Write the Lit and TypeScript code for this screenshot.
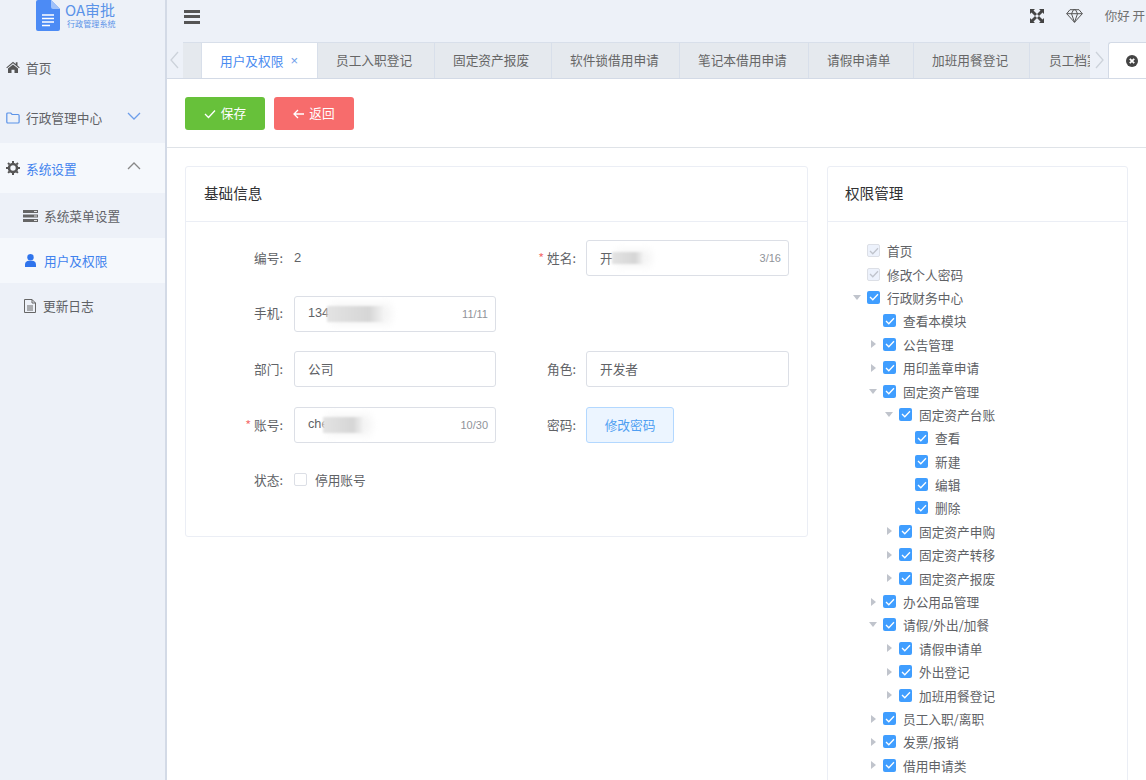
import { LitElement, css, html, svg } from 'lit';
import { customElement } from 'lit/decorators.js';

type TreeRow = { label: string; level: number; arrow?: 'open' | 'closed'; disabled?: boolean };

const TABS = [
  { label: '员工入职登记', width: 117 },
  { label: '固定资产报废', width: 117 },
  { label: '软件锁借用申请', width: 128 },
  { label: '笔记本借用申请', width: 129 },
  { label: '请假申请单', width: 105 },
  { label: '加班用餐登记', width: 116 },
];

const TREE: TreeRow[] = [
  { label: '首页', level: 0, disabled: true },
  { label: '修改个人密码', level: 0, disabled: true },
  { label: '行政财务中心', level: 0, arrow: 'open' },
  { label: '查看本模块', level: 1 },
  { label: '公告管理', level: 1, arrow: 'closed' },
  { label: '用印盖章申请', level: 1, arrow: 'closed' },
  { label: '固定资产管理', level: 1, arrow: 'open' },
  { label: '固定资产台账', level: 2, arrow: 'open' },
  { label: '查看', level: 3 },
  { label: '新建', level: 3 },
  { label: '编辑', level: 3 },
  { label: '删除', level: 3 },
  { label: '固定资产申购', level: 2, arrow: 'closed' },
  { label: '固定资产转移', level: 2, arrow: 'closed' },
  { label: '固定资产报废', level: 2, arrow: 'closed' },
  { label: '办公用品管理', level: 1, arrow: 'closed' },
  { label: '请假/外出/加餐', level: 1, arrow: 'open' },
  { label: '请假申请单', level: 2, arrow: 'closed' },
  { label: '外出登记', level: 2, arrow: 'closed' },
  { label: '加班用餐登记', level: 2, arrow: 'closed' },
  { label: '员工入职/离职', level: 1, arrow: 'closed' },
  { label: '发票/报销', level: 1, arrow: 'closed' },
  { label: '借用申请类', level: 1, arrow: 'closed' },
];

const chevron = (d: string, color: string, w = 14, h = 10, vb = '0 0 14 10') => svg`
  <svg width=${w} height=${h} viewBox=${vb} fill="none" stroke=${color} stroke-width="1.3"><path d=${d}/></svg>`;

@customElement('app-root')
export class AppRoot extends LitElement {
  render() {
    return html`
      <div class="page">
        <aside class="side">
          <div class="logo">
            <svg width="24" height="32" viewBox="0 0 24 32">
              <path d="M2 0H15L24 9V29a2 2 0 0 1-2 2H2a2 2 0 0 1-2-2V2a2 2 0 0 1 2-2z" fill="#4c8bf5"/>
              <path d="M15 0L24 9H17a2 2 0 0 1-2-2z" fill="#a1c2fa"/>
              <path d="M6 15H18M6 18.5H18M6 22H18M6 25.5H14" stroke="#fff" stroke-width="1.4"/>
            </svg>
            <div class="logo-text">
              <div class="logo-title">OA审批</div>
              <div class="logo-sub">行政管理系统</div>
            </div>
          </div>
          <div class="menu-item home">
            <svg class="mi" width="14" height="12" viewBox="0 0 14 12" fill="#555"><path d="M7 .8L.3 6.400l.7.8L7 2.300l6 4.900.7-.8-2.200-1.900V1.200H9.800v1.700zM2 7.600L7 3.500l5 4.100V12H8.500V8.800h-3V12H2z"/></svg>
            首页
          </div>
          <div class="menu-item admin">
            <svg class="mi" width="14" height="12" viewBox="0 0 14 12" fill="none" stroke="#5b93e8" stroke-width="1.2"><path d="M.8 2a1 1 0 0 1 1-1h3l1.300 1.500h6a1 1 0 0 1 1 1v6.500a1 1 0 0 1-1 1H1.800a1 1 0 0 1-1-1z"/></svg>
            行政管理中心
            <span class="caret">${chevron('M1 2l6 6 6-6', '#6d9eea')}</span>
          </div>
          <div class="menu-item sys">
            <svg class="mi" width="14" height="14" viewBox="0 0 14 14"><circle cx="7" cy="7" r="4" fill="none" stroke="#555" stroke-width="2.6"/><path d="M7 0v14M0 7h14M2 2l10 10M12 2L2 12" stroke="#555" stroke-width="2" stroke-dasharray="2 10"/></svg>
            <span class="blue">系统设置</span>
            <span class="caret">${chevron('M1 8l6-6 6 6', '#888')}</span>
          </div>
          <div class="sub">
            <svg class="si" width="15" height="12" viewBox="0 0 15 12" fill="#666"><path d="M0 0h15v3H0zM0 4.500h15v3H0zM0 9h15v3H0z"/><path d="M11 1.500h3M11 6h3M11 10.500h3" stroke="#fff" stroke-width=".8"/></svg>
            系统菜单设置
          </div>
          <div class="sub on">
            <svg class="si user" width="11" height="13" viewBox="0 0 11 13" fill="#2f74ec"><circle cx="5.500" cy="3.200" r="3.200"/><path d="M0 13v-2.500C0 8 2 6.800 3.500 6.800h4C9 6.800 11 8 11 10.500V13z"/></svg>
            用户及权限
          </div>
          <div class="sub">
            <svg class="si log" width="12" height="14" viewBox="0 0 12 14" fill="none" stroke="#666"><path d="M.5.500h7.500l3.500 3.500v9.500H.5zM8 .500V4h3.500M3 7h6M3 9h6M3 11h6"/></svg>
            更新日志
          </div>
        </aside>

        <div class="main">
          <header class="top">
            <div class="burger"><i></i><i></i><i></i></div>
            <div class="top-right">
              <svg width="14" height="14" viewBox="0 0 14 14" fill="#444"><path d="M0 0h5L3.500 1.500 7 5 5 7 1.500 3.500 0 5zM14 0v5l-1.500-1.500L9 7 7 5l3.500-3.500L9 0zM0 14V9l1.500 1.500L5 7l2 2-3.500 3.500L5 14zM14 14H9l1.500-1.500L7 9l2-2 3.500 3.500L14 9z"/></svg>
              <svg width="17" height="14" viewBox="0 0 17 14" fill="none" stroke="#555" stroke-width="1"><path d="M4 .7h9l3.300 4L8.500 13.300.7 4.700zM.7 4.700h15.600M5.500 4.700L8.500 13.300 11.500 4.700 9.500.7h-2z"/></svg>
              <span class="hello">你好 开</span>
            </div>
          </header>

          <nav class="tabs">
            <div class="arrow">${chevron('M9 1L2 9l7 8', '#ccd2da', 10, 18, '0 0 10 18')}</div>
            <div class="strip">
              <div class="tab active">用户及权限<span class="x">×</span></div>
              ${TABS.map((t) => html`<div class="tab" style="width:${t.width}px">${t.label}</div>`)}
              <div class="tab last">员工档案管理</div>
            </div>
            <div class="arrow right">${chevron('M1 1l7 8-7 8', '#ccd2da', 10, 18, '0 0 10 18')}</div>
            <div class="close-all">
              <svg width="12" height="12" viewBox="0 0 12 12"><circle cx="6" cy="6" r="6" fill="#444"/><path d="M3.800 3.800l4.400 4.400M8.200 3.800l-4.400 4.400" stroke="#fff" stroke-width="1.800"/></svg>
            </div>
          </nav>

          <div class="toolbar">
            <button class="btn save">
              <svg width="12" height="10" viewBox="0 0 12 10" fill="none" stroke="#fff" stroke-width="1.300"><path d="M1 5l3.500 3.500L11 1.500"/></svg>
              保存
            </button>
            <button class="btn back">
              <svg width="11" height="10" viewBox="0 0 11 10" fill="none" stroke="#fff" stroke-width="1.300"><path d="M5 1L1 5l4 4M1 5h10"/></svg>
              返回
            </button>
          </div>

          <div class="content">
            <section class="card base">
              <div class="card-head">基础信息</div>
              <div class="form">
                <div class="label">编号:</div>
                <div class="value">2</div>
                <div class="label right"><b>*</b>姓名:</div>
                ${this.input('开', '3/16', 'm-name')}

                <div class="label">手机:</div>
                ${this.input('134', '11/11', 'm-phone')}
                <div></div>
                <div></div>

                <div class="label">部门:</div>
                ${this.input('公司')}
                <div class="label right">角色:</div>
                ${this.input('开发者')}

                <div class="label"><b>*</b>账号:</div>
                ${this.input('che', '10/30', 'm-acct')}
                <div class="label right">密码:</div>
                <div><button class="pw">修改密码</button></div>

                <div class="label">状态:</div>
                <label class="status"><span class="box"></span>停用账号</label>
              </div>
            </section>

            <section class="card perm">
              <div class="card-head">权限管理</div>
              <div class="tree">${TREE.map((r) => this.treeRow(r))}</div>
            </section>
          </div>
        </div>
      </div>
    `;
  }

  private input(value: string, count = '', mask = '') {
    return html`<div class="input">
      <span>${value}</span>
      ${mask ? html`<i class="mask ${mask}"></i>` : ''}
      <em>${count}</em>
    </div>`;
  }

  private treeRow(r: TreeRow) {
    return html`<div class="row" style="padding-left:${r.level * 16}px">
      <span class="tri ${r.arrow ?? 'none'}"></span>
      <span class="check ${r.disabled ? 'off' : ''}">
        <svg width="10" height="8" viewBox="0 0 10 8" fill="none" stroke=${r.disabled ? '#c0c4cc' : '#fff'} stroke-width="1.3"><path d="M1 4l2.800 2.800L9 1.200"/></svg>
      </span>
      <span class="name">${r.label}</span>
    </div>`;
  }

  static styles = css`
    :host {
      display: block;
      width: 1146px;
      height: 780px;
      overflow: hidden;
      font-family: 'Noto Sans CJK SC', 'Liberation Sans', sans-serif;
      font-size: 12.7px;
      color: #606266;
    }
    .page {
      display: flex;
      height: 780px;
    }

    .side {
      width: 165px;
      flex: none;
      background: #edf1f8;
      border-right: 2px solid #d3dae6;
      color: #606266;
    }
    .logo {
      display: flex;
      height: 42px;
      padding-left: 36px;
      gap: 5px;
      align-items: flex-start;
    }
    .logo-text {
      color: #5b93e8;
      line-height: 1;
    }
    .logo-title {
      font-size: 15px;
      margin-top: 2px;
    }
    .logo-sub {
      font-size: 8.1px;
      margin-top: 3px;
      margin-left: 2px;
    }
    .menu-item {
      display: flex;
      align-items: center;
      padding-left: 6px;
    }
    .mi {
      margin-right: 6px;
      flex: none;
    }
    .home { height: 50px; }
    .admin { height: 51px; }
    .sys {
      height: 50px;
      background: #f5f8fc;
    }
    .blue { color: #3f82ee; }
    .caret {
      margin-left: auto;
      margin-right: 24px;
      display: flex;
      position: relative;
      top: -2px;
    }
    .sub {
      height: 45px;
      display: flex;
      align-items: center;
      padding-left: 23px;
    }
    .sub.on {
      background: #f5f8fc;
      color: #3f82ee;
    }
    .si { margin-right: 6px; flex: none; }
    .si.user { margin-left: 2px; margin-right: 8px; }
    .si.log { margin-left: 1px; margin-right: 7px; }

    .main {
      flex: 1;
      min-width: 0;
      display: flex;
      flex-direction: column;
      background: #fff;
    }
    .top {
      height: 42px;
      flex: none;
      background: #edf1f8;
      display: flex;
      align-items: center;
      justify-content: space-between;
      overflow: hidden;
    }
    .burger {
      margin-left: 17px;
      width: 16px;
      display: flex;
      flex-direction: column;
      gap: 2.5px;
      margin-top: -9px;
    }
    .burger i {
      height: 3px;
      background: #555;
    }
    .top-right {
      display: flex;
      align-items: center;
      gap: 22px;
      margin: -11px 1px 0 0;
      white-space: nowrap;
    }
    .hello {
      font-size: 12.5px;
      color: #707070;
    }

    .tabs {
      height: 37px;
      flex: none;
      display: flex;
      background: #edf1f8;
      border-bottom: 1px solid #d3dae6;
      box-sizing: border-box;
    }
    .arrow {
      width: 16px;
      flex: none;
      display: flex;
      align-items: center;
      padding-left: 2px;
      box-sizing: border-box;
    }
    .arrow.right {
      width: 18px;
      padding-left: 5px;
    }
    .strip {
      flex: 1;
      min-width: 0;
      display: flex;
      overflow: hidden;
      background: #e5e9ee;
      border-top: 1px solid #d8dfea;
      padding-left: 18px;
    }
    .tab {
      flex: none;
      display: flex;
      align-items: center;
      box-sizing: border-box;
      width: 117px;
      height: 35px;
      padding: 0 0 2px 18px;
      border-right: 1px solid #d8dfea;
      white-space: nowrap;
      color: #666;
    }
    .tab.last {
      border-right: none;
      width: 60px;
      overflow: hidden;
      padding-left: 19px;
    }
    .tab.active {
      background: #fff;
      color: #4a8bf0;
      height: 36px;
      border-left: 1px solid #d8dfea;
      padding-left: 18px;
    }
    .x {
      margin-left: 7px;
      font-family: 'Liberation Sans', sans-serif;
      font-size: 13px;
      color: #6d9eea;
    }
    .close-all {
      width: 38px;
      flex: none;
      height: 36px;
      background: #fff;
      border: 1px solid #d3dae6;
      border-bottom: none;
      border-right: none;
      border-top-left-radius: 3px;
      box-sizing: border-box;
      display: flex;
      align-items: center;
      padding-left: 17px;
    }

    .toolbar {
      height: 69px;
      flex: none;
      box-sizing: border-box;
      border-bottom: 1px solid #dfe3e8;
      display: flex;
      gap: 9px;
      padding: 18px 0 0 18px;
    }
    .btn {
      width: 80px;
      height: 33px;
      border: none;
      border-radius: 3px;
      color: #fff;
      font: inherit;
      display: flex;
      align-items: center;
      justify-content: center;
      gap: 5px;
      padding: 0 0 2px;
    }
    .btn svg { margin-top: 2px; }
    .save { background: #67c13a; }
    .back { background: #f76c6c; }

    .content {
      flex: 1;
      min-height: 0;
      display: flex;
      align-items: flex-start;
      gap: 19px;
      padding: 18px 0 0 18px;
      overflow: hidden;
    }
    .card {
      flex: none;
      box-sizing: border-box;
      border: 1px solid #ebeef5;
      border-radius: 3px;
      background: #fff;
    }
    .card.base {
      width: 623px;
      height: 371px;
    }
    .card.perm {
      width: 301px;
      height: 640px;
    }
    .card-head {
      height: 55px;
      box-sizing: border-box;
      border-bottom: 1px solid #ebeef5;
      padding: 0 0 4px 18px;
      display: flex;
      align-items: center;
      font-size: 14.6px;
      color: #303133;
    }
    .perm .card-head { padding-left: 17px; }

    .form {
      display: grid;
      grid-template-columns: 108px 202px 90px 203px;
      grid-auto-rows: 36px;
      row-gap: 19.7px;
      padding-top: 18px;
      align-items: center;
    }
    .label {
      text-align: right;
      padding: 0 11px 2px 0;
      box-sizing: border-box;
    }
    .label.right { padding-right: 10px; }
    .label b {
      color: #f56c6c;
      font-weight: 400;
      margin-right: 3px;
    }
    .value {
      font-family: 'Liberation Sans', sans-serif;
      font-size: 13px;
      padding-bottom: 2px;
    }
    .input {
      position: relative;
      height: 36px;
      box-sizing: border-box;
      border: 1px solid #dcdfe6;
      border-radius: 3px;
      display: flex;
      align-items: center;
      justify-content: space-between;
      padding: 0 7px 2px 13px;
    }
    .input span {
      font-family: 'Liberation Sans', 'Noto Sans CJK SC', sans-serif;
    }
    .input em {
      font-family: 'Liberation Sans', sans-serif;
      font-style: normal;
      font-size: 11px;
      color: #909399;
      padding-top: 2px;
    }
    .mask {
      position: absolute;
      top: 50%;
      transform: translateY(-50%);
      height: 15px;
      background: linear-gradient(90deg, #e3e3e3, #d6d6d6 75%, #f2f2f2);
      box-shadow: 6px 0 8px 2px #f4f4f4;
      filter: blur(1px);
    }
    .m-name { left: 25px; width: 31px; height: 12px; }
    .m-phone { left: 32px; width: 56px; height: 16px; }
    .m-acct { left: 28px; width: 40px; height: 16px; }
    .pw {
      width: 88px;
      height: 36px;
      border: 1px solid #b3d8ff;
      border-radius: 3px;
      background: #ecf5ff;
      color: #4f9ff2;
      font: inherit;
      padding: 0 0 2px;
    }
    .status {
      display: flex;
      align-items: center;
      gap: 8px;
      grid-column: span 3;
      padding-bottom: 2px;
    }
    .box {
      width: 13px;
      height: 13px;
      box-sizing: border-box;
      border: 1px solid #dcdfe6;
      border-radius: 2px;
    }

    .tree {
      padding: 17px 0 0 22px;
    }
    .row {
      height: 23.4px;
      display: flex;
      align-items: center;
    }
    .tri {
      width: 0;
      height: 0;
      flex: none;
      margin: 0 6px 0 3px;
      border: 4px solid transparent;
    }
    .tri.open {
      border-top: 5px solid #c0c4cc;
      border-bottom: none;
    }
    .tri.closed {
      border-left: 5px solid #c0c4cc;
      border-right: none;
      margin: 0 7.5px 0 4.5px;
    }
    .tri.none { visibility: hidden; }
    .check {
      width: 13px;
      height: 13px;
      flex: none;
      border-radius: 2px;
      background: #409eff;
      display: flex;
      align-items: center;
      justify-content: center;
      margin-right: 7px;
    }
    .check.off {
      background: #edf2fc;
      box-sizing: border-box;
      border: 1px solid #dcdfe6;
    }
    .name { white-space: nowrap; }
  `;
}

declare global {
  interface HTMLElementTagNameMap {
    'app-root': AppRoot;
  }
}
